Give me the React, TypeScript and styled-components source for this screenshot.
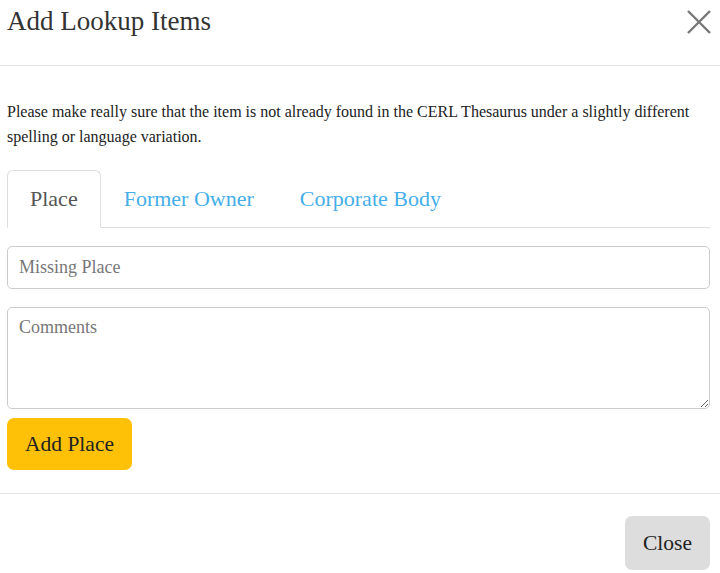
import React from "react";
import styled, { createGlobalStyle } from "styled-components";

const Global = createGlobalStyle`
  html, body { margin: 0; padding: 0; background: #fff; }
  body { font-family: "Liberation Serif", "DejaVu Serif", serif; color: #333; }
  * { box-sizing: border-box; }
`;

const Dialog = styled.div`
  width: 720px;
  height: 573px;
  display: flex;
  flex-direction: column;
  background: #fff;
  overflow: hidden;
`;

const Header = styled.div`
  height: 66px;
  display: flex;
  justify-content: space-between;
  align-items: flex-start;
  padding: 4px 8px 0 7px;
  border-bottom: 1px solid #e5e5e5;
`;

const Title = styled.h4`
  margin: 0;
  font-size: 27px;
  font-weight: 400;
  line-height: 34px;
  color: #333;
`;

const CloseX = styled.button`
  border: 0;
  background: none;
  padding: 0;
  margin-top: 5px;
  width: 26px;
  height: 26px;
  cursor: pointer;
  display: flex;
`;

const Body = styled.div`
  padding: 33px 10px 0 7px;
  display: flex;
  flex-direction: column;
`;

const Note = styled.p`
  margin: 0 0 21px;
  font-size: 16px;
  line-height: 25px;
  color: #222;
`;

const Tabs = styled.div`
  display: flex;
  border-bottom: 1px solid #ddd;
  height: 58px;
`;

const Tab = styled.div<{ $active?: boolean }>`
  padding: 0 22px;
  display: flex;
  align-items: center;
  font-size: 22px;
  color: ${(p) => (p.$active ? "#555" : "#45aee8")};
  border: 1px solid ${(p) => (p.$active ? "#ddd" : "transparent")};
  border-bottom-color: ${(p) => (p.$active ? "#fff" : "transparent")};
  border-radius: 6px 6px 0 0;
  background: ${(p) => (p.$active ? "#fff" : "transparent")};
  margin-bottom: -1px;
  cursor: pointer;
`;

const Form = styled.div`
  display: flex;
  flex-direction: column;
  padding-top: 18px;
`;

const Input = styled.input`
  height: 43px;
  border: 1px solid #ccc;
  border-radius: 5px;
  padding: 0 11px;
  font-family: inherit;
  font-size: 18px;
  color: #555;
  margin-bottom: 18px;
  &::placeholder { color: #777; }
`;

const TextArea = styled.textarea`
  height: 102px;
  border: 1px solid #ccc;
  border-radius: 5px;
  padding: 9px 11px;
  font-family: inherit;
  font-size: 18px;
  color: #555;
  resize: vertical;
  margin: 0 0 9px;
  display: block;
  &::placeholder { color: #777; }
`;

const Button = styled.button<{ $tone: "primary" | "plain" }>`
  align-self: ${(p) => (p.$tone === "primary" ? "flex-start" : "flex-end")};
  border: 0;
  border-radius: 7px;
  font-family: inherit;
  font-size: 21.5px;
  color: #222;
  background: ${(p) => (p.$tone === "primary" ? "#ffc107" : "#dddddd")};
  height: ${(p) => (p.$tone === "primary" ? "52px" : "54px")};
  padding: 0 ${(p) => (p.$tone === "primary" ? "18px" : "18px")};
  cursor: pointer;
`;

const Footer = styled.div`
  margin-top: 23px;
  border-top: 1px solid #e5e5e5;
  padding: 22px 10px 0 7px;
  display: flex;
  justify-content: flex-end;
`;

export default function App() {
  return (
    <Dialog>
      <Global />
      <Header>
        <Title>Add Lookup Items</Title>
        <CloseX aria-label="Close">
          <svg width="26" height="26" viewBox="0 0 26 26">
            <path d="M2 2 L24 24 M24 2 L2 24" stroke="#777" strokeWidth="2.4" fill="none" />
          </svg>
        </CloseX>
      </Header>
      <Body>
        <Note>
          Please make really sure that the item is not already found in the CERL Thesaurus under a slightly different
          spelling or language variation.
        </Note>
        <Tabs>
          <Tab $active>Place</Tab>
          <Tab>Former Owner</Tab>
          <Tab>Corporate Body</Tab>
        </Tabs>
        <Form>
          <Input placeholder="Missing Place" />
          <TextArea placeholder="Comments" />
          <Button $tone="primary">Add Place</Button>
        </Form>
      </Body>
      <Footer>
        <Button $tone="plain">Close</Button>
      </Footer>
    </Dialog>
  );
}
